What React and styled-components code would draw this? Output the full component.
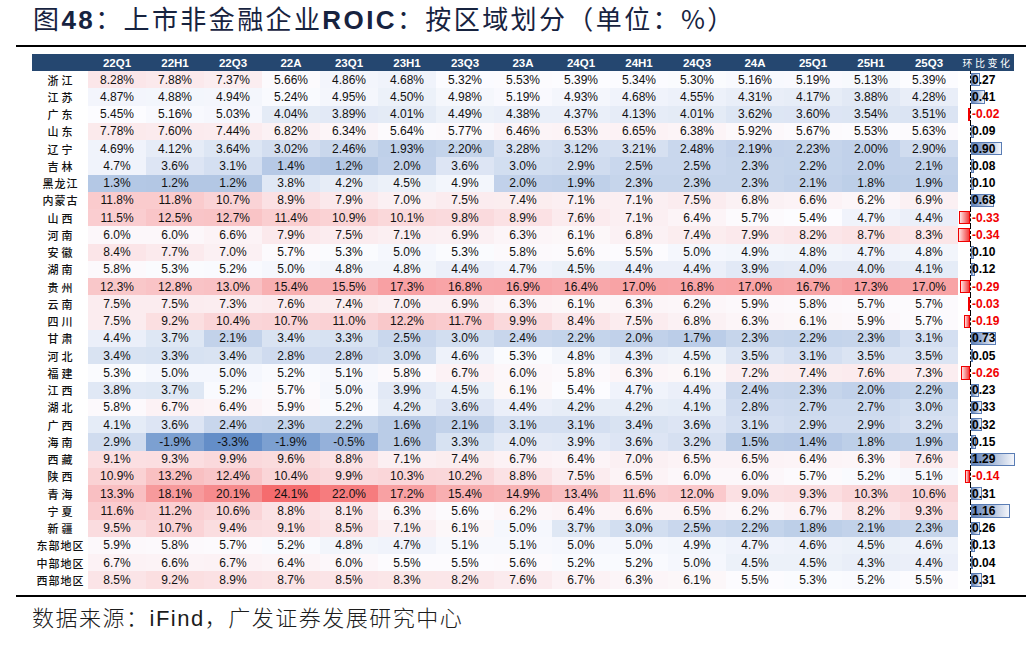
import React from 'react';
import styled, { createGlobalStyle } from 'styled-components';

const GlobalStyle = createGlobalStyle`
  body {
    margin: 0;
    background: #fff;
    font-family: "Liberation Sans", Arial, "Noto Sans CJK SC", sans-serif;
  }
`;

const COLS = ['22Q1', '22H1', '22Q3', '22A', '23Q1', '23H1', '23Q3', '23A',
  '24Q1', '24H1', '24Q3', '24A', '25Q1', '25H1', '25Q3'];

const ROWS = [
  ['浙江', '8.28% 7.88% 7.37% 5.66% 4.86% 4.68% 5.32% 5.53% 5.39% 5.34% 5.30% 5.16% 5.19% 5.13% 5.39%', '0.27'],
  ['江苏', '4.87% 4.88% 4.94% 5.24% 4.95% 4.50% 4.98% 5.19% 4.93% 4.68% 4.55% 4.31% 4.17% 3.88% 4.28%', '0.41'],
  ['广东', '5.45% 5.16% 5.03% 4.04% 3.89% 4.01% 4.49% 4.38% 4.37% 4.13% 4.01% 3.62% 3.60% 3.54% 3.51%', '-0.02'],
  ['山东', '7.78% 7.60% 7.44% 6.82% 6.34% 5.64% 5.77% 6.46% 6.53% 6.65% 6.38% 5.92% 5.67% 5.53% 5.63%', '0.09'],
  ['辽宁', '4.69% 4.12% 3.64% 3.02% 2.46% 1.93% 2.20% 3.28% 3.12% 3.21% 2.48% 2.19% 2.23% 2.00% 2.90%', '0.90'],
  ['吉林', '4.7% 3.6% 3.1% 1.4% 1.2% 2.0% 3.6% 3.0% 2.9% 2.5% 2.5% 2.3% 2.2% 2.0% 2.1%', '0.08'],
  ['黑龙江', '1.3% 1.2% 1.2% 3.8% 4.2% 4.5% 4.9% 2.0% 1.9% 2.3% 2.3% 2.3% 2.1% 1.8% 1.9%', '0.10'],
  ['内蒙古', '11.8% 11.8% 10.7% 8.9% 7.9% 7.0% 7.5% 7.4% 7.1% 7.1% 7.5% 6.8% 6.6% 6.2% 6.9%', '0.68'],
  ['山西', '11.5% 12.5% 12.7% 11.4% 10.9% 10.1% 9.8% 8.9% 7.6% 7.1% 6.4% 5.7% 5.4% 4.7% 4.4%', '-0.33'],
  ['河南', '6.0% 6.0% 6.6% 7.9% 7.5% 7.1% 6.9% 6.3% 6.1% 6.8% 7.4% 7.9% 8.2% 8.7% 8.3%', '-0.34'],
  ['安徽', '8.4% 7.7% 7.0% 5.7% 5.3% 5.0% 5.3% 5.8% 5.6% 5.5% 5.0% 4.9% 4.8% 4.7% 4.8%', '0.10'],
  ['湖南', '5.8% 5.3% 5.2% 5.0% 4.8% 4.8% 4.4% 4.7% 4.5% 4.4% 4.4% 3.9% 4.0% 4.0% 4.1%', '0.12'],
  ['贵州', '12.3% 12.8% 13.0% 15.4% 15.5% 17.3% 16.8% 16.9% 16.4% 17.0% 16.8% 17.0% 16.7% 17.3% 17.0%', '-0.29'],
  ['云南', '7.5% 7.5% 7.3% 7.6% 7.4% 7.0% 6.9% 6.3% 6.1% 6.3% 6.2% 5.9% 5.8% 5.7% 5.7%', '-0.03'],
  ['四川', '7.5% 9.2% 10.4% 10.7% 11.0% 12.2% 11.7% 9.9% 8.4% 7.5% 6.8% 6.3% 6.1% 5.9% 5.7%', '-0.19'],
  ['甘肃', '4.4% 3.7% 2.1% 3.4% 3.3% 2.5% 3.0% 2.4% 2.2% 2.0% 1.7% 2.3% 2.2% 2.3% 3.1%', '0.73'],
  ['河北', '3.4% 3.3% 3.4% 2.8% 2.8% 3.0% 4.6% 5.3% 4.8% 4.3% 4.5% 3.5% 3.1% 3.5% 3.5%', '0.05'],
  ['福建', '5.3% 5.0% 5.0% 5.2% 5.1% 5.8% 6.7% 6.0% 5.8% 6.3% 6.1% 7.2% 7.4% 7.6% 7.3%', '-0.26'],
  ['江西', '3.8% 3.7% 5.2% 5.7% 5.0% 3.9% 4.5% 6.1% 5.4% 4.7% 4.4% 2.4% 2.3% 2.0% 2.2%', '0.23'],
  ['湖北', '5.8% 6.7% 6.4% 5.9% 5.2% 4.2% 3.6% 4.4% 4.2% 4.2% 4.1% 2.8% 2.7% 2.7% 3.0%', '0.33'],
  ['广西', '4.1% 3.6% 2.4% 2.3% 2.2% 1.6% 2.1% 3.1% 3.1% 3.4% 3.6% 3.1% 2.9% 2.9% 3.2%', '0.32'],
  ['海南', '2.9% -1.9% -3.3% -1.9% -0.5% 1.6% 3.3% 4.0% 3.9% 3.6% 3.2% 1.5% 1.4% 1.8% 1.9%', '0.15'],
  ['西藏', '9.1% 9.3% 9.9% 9.6% 8.8% 7.1% 7.4% 6.7% 6.4% 7.0% 6.5% 6.5% 6.4% 6.3% 7.6%', '1.29'],
  ['陕西', '10.9% 13.2% 12.4% 10.4% 9.9% 10.3% 10.2% 8.8% 7.5% 6.5% 6.0% 6.0% 5.7% 5.2% 5.1%', '-0.14'],
  ['青海', '13.3% 18.1% 20.1% 24.1% 22.0% 17.2% 15.4% 14.9% 13.4% 11.6% 12.0% 9.0% 9.3% 10.3% 10.6%', '0.31'],
  ['宁夏', '11.6% 11.2% 10.6% 8.8% 8.1% 6.3% 5.6% 6.2% 6.4% 6.6% 6.5% 6.2% 6.7% 8.2% 9.3%', '1.16'],
  ['新疆', '9.5% 10.7% 9.4% 9.1% 8.5% 7.1% 6.1% 5.0% 3.7% 3.0% 2.5% 2.2% 1.8% 2.1% 2.3%', '0.26'],
  ['东部地区', '5.9% 5.8% 5.7% 5.2% 4.8% 4.7% 5.1% 5.1% 5.0% 5.0% 4.9% 4.7% 4.6% 4.5% 4.6%', '0.13'],
  ['中部地区', '6.7% 6.6% 6.7% 6.4% 6.0% 5.5% 5.5% 5.6% 5.2% 5.2% 5.0% 4.5% 4.5% 4.3% 4.4%', '0.04'],
  ['西部地区', '8.5% 9.2% 8.9% 8.7% 8.5% 8.3% 8.2% 7.6% 6.7% 6.3% 6.1% 5.5% 5.3% 5.2% 5.5%', '0.31'],
].map(([name, vals, change]) => ({ name, values: vals.split(' '), change }));

// three-colour scale over the whole table, midpoint at the median
const all = ROWS.flatMap((r) => r.values.map(parseFloat)).sort((a, b) => a - b);
const MIN = all[0];
const MAX = all[all.length - 1];
const MID = all[Math.floor(all.length / 2)];
const WHITE = [252, 252, 255];
const RED = [245, 108, 110];
const BLUE = [100, 142, 200];

const mix = (a, b, t) => a.map((c, i) => Math.round(c + (b[i] - c) * t));
const heat = (s) => {
  const v = parseFloat(s);
  const rgb = v >= MID
    ? mix(WHITE, RED, (v - MID) / (MAX - MID))
    : mix(WHITE, BLUE, (MID - v) / (MID - MIN));
  return `rgb(${rgb.join(',')})`;
};

const PX_PER_UNIT = 34;
const AXIS = 12;

const Page = styled.div`
  width: 1026px;
  height: 646px;
  overflow: hidden;
`;

const Title = styled.h1`
  margin: 0 0 0 16px;
  height: 47px;
  padding-left: 17px;
  border-bottom: 2px solid #000;
  box-sizing: border-box;
  font-family: "Noto Sans CJK SC", sans-serif;
  font-size: 26px;
  font-weight: 400;
  line-height: 36px;
  letter-spacing: 2.4px;
  color: #17233f;
  white-space: nowrap;

  & b {
    font-family: "Liberation Sans", Arial, sans-serif;
    font-weight: 700;
  }
`;

const Table = styled.div`
  margin: 7px 0 0 32px;
  width: 982px;
`;

const Row = styled.div`
  display: grid;
  grid-template-columns: 56px repeat(15, 58px) 56px;
  height: ${(p) => (p.$head ? '17px' : '17.25px')};
  background: ${(p) => (p.$head ? '#254770' : 'transparent')};
`;

const HeadCell = styled.div`
  display: flex;
  align-items: center;
  justify-content: center;
  color: #fff;
  font-size: 11.5px;
  font-weight: 700;
`;

const HeadCjk = styled(HeadCell)`
  font-family: "Noto Sans CJK SC", sans-serif;
  font-size: 10px;
  font-weight: 400;
  letter-spacing: 2.5px;
  padding-left: 3px;
`;

const Label = styled.div`
  display: flex;
  align-items: center;
  justify-content: center;
  font-family: "Noto Sans CJK SC", sans-serif;
  font-size: 11px;
  font-weight: 500;
  letter-spacing: ${(p) => (p.$short ? '3px' : '1px')};
  padding-left: ${(p) => (p.$short ? '3px' : '1px')};
  color: #111;
`;

const Cell = styled.div`
  display: flex;
  align-items: center;
  justify-content: center;
  font-size: 12px;
  color: #111;
`;

const ChangeCell = styled.div`
  position: relative;
  display: flex;
  align-items: center;
  padding-left: ${AXIS + 2}px;
  font-size: 12px;
  font-weight: 700;
  color: ${(p) => (p.$neg ? '#f00000' : '#000')};

  &::before {
    content: '';
    position: absolute;
    left: ${AXIS}px;
    top: 0;
    bottom: 0;
    border-left: 1px dashed #000;
  }
`;

const Bar = styled.span`
  position: absolute;
  top: 2px;
  bottom: 2px;
  box-sizing: border-box;
  ${(p) => (p.$neg
    ? `right: calc(100% - ${AXIS}px);
       border: 1px solid #f00000;
       background: linear-gradient(to left, #f23c3c, #ffe3e3);`
    : `left: ${AXIS + 1}px;
       border: 1px solid #5a7db5;
       background: linear-gradient(to right, #5f80b6, #f4f6fb);`)}
`;

const Value = styled.span`
  position: relative;
`;

const BottomRule = styled.div`
  margin: 6px 0 0 16px;
  border-top: 2px solid #000;
`;

const Source = styled.p`
  margin: 3px 0 0 32px;
  font-family: "Noto Sans CJK SC", sans-serif;
  font-size: 22px;
  font-weight: 300;
  line-height: 32px;
  letter-spacing: 1.5px;
  color: #1c1c1c;

  & span {
    font-family: "Liberation Sans", Arial, sans-serif;
    font-weight: 400;
  }
`;

function ChangeValue({ value }) {
  const v = parseFloat(value);
  const neg = v < 0;
  return (
    <ChangeCell $neg={neg}>
      <Bar $neg={neg} style={{ width: `${Math.max(Math.abs(v) * PX_PER_UNIT, 2)}px` }} />
      <Value>{value}</Value>
    </ChangeCell>
  );
}

export default function App() {
  return (
    <Page>
      <GlobalStyle />
      <Title>
        图<b>48</b>：上市非金融企业<b>ROIC</b>：按区域划分（单位：%）
      </Title>
      <Table>
        <Row $head>
          <HeadCell />
          {COLS.map((c) => <HeadCell key={c}>{c}</HeadCell>)}
          <HeadCjk>环比变化</HeadCjk>
        </Row>
        {ROWS.map((r) => (
          <Row key={r.name}>
            <Label $short={r.name.length === 2}>{r.name}</Label>
            {r.values.map((v, i) => (
              <Cell key={COLS[i]} style={{ background: heat(v) }}>{v}</Cell>
            ))}
            <ChangeValue value={r.change} />
          </Row>
        ))}
      </Table>
      <BottomRule />
      <Source>
        数据来源：<span>iFind</span>，广发证券发展研究中心
      </Source>
    </Page>
  );
}
